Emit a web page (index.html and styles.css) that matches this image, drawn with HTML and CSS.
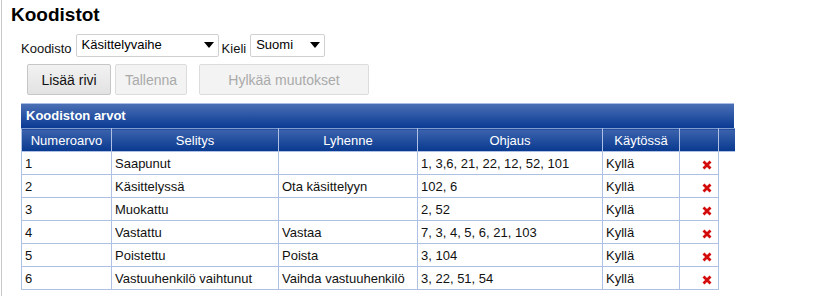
FILE: index.html
```html
<!DOCTYPE html>
<html lang="fi">
<head>
  <meta charset="UTF-8">
  <title>Koodistot</title>
  <link rel="stylesheet" href="styles.css">
</head>
<body>
  <div class="page">
    <h1>Koodistot</h1>

    <div class="filters">
      <label for="koodisto">Koodisto</label>
      <div class="select-wrap wide">
        <select id="koodisto">
          <option>Käsittelyvaihe</option>
        </select>
      </div>
      <label for="kieli">Kieli</label>
      <div class="select-wrap narrow">
        <select id="kieli">
          <option>Suomi</option>
        </select>
      </div>
    </div>

    <div class="toolbar">
      <button class="btn btn-add">Lisää rivi</button>
      <button class="btn btn-save" disabled>Tallenna</button>
      <button class="btn btn-reject" disabled>Hylkää muutokset</button>
    </div>

    <!-- Koodiston arvot -->
    <div class="grid">
      <div class="grid-caption">Koodiston arvot</div>
      <table>
        <thead>
          <tr>
            <th class="c-num">Numeroarvo</th>
            <th class="c-sel">Selitys</th>
            <th class="c-lyh">Lyhenne</th>
            <th class="c-ohj">Ohjaus</th>
            <th class="c-kay">Käytössä</th>
            <th class="c-del"></th>
            <th class="c-gap"></th>
          </tr>
        </thead>
        <tbody>
          <tr><td>1</td><td>Saapunut</td><td></td><td>1, 3,6, 21, 22, 12, 52, 101</td><td>Kyllä</td><td class="del"><svg viewBox="0 0 10 10"><path d="M1.5 1.5 8.5 8.5M8.5 1.5 1.5 8.5"/></svg></td></tr>
          <tr><td>2</td><td>Käsittelyssä</td><td>Ota käsittelyyn</td><td>102, 6</td><td>Kyllä</td><td class="del"><svg viewBox="0 0 10 10"><path d="M1.5 1.5 8.5 8.5M8.5 1.5 1.5 8.5"/></svg></td></tr>
          <tr><td>3</td><td>Muokattu</td><td></td><td>2, 52</td><td>Kyllä</td><td class="del"><svg viewBox="0 0 10 10"><path d="M1.5 1.5 8.5 8.5M8.5 1.5 1.5 8.5"/></svg></td></tr>
          <tr><td>4</td><td>Vastattu</td><td>Vastaa</td><td>7, 3, 4, 5, 6, 21, 103</td><td>Kyllä</td><td class="del"><svg viewBox="0 0 10 10"><path d="M1.5 1.5 8.5 8.5M8.5 1.5 1.5 8.5"/></svg></td></tr>
          <tr><td>5</td><td>Poistettu</td><td>Poista</td><td>3, 104</td><td>Kyllä</td><td class="del"><svg viewBox="0 0 10 10"><path d="M1.5 1.5 8.5 8.5M8.5 1.5 1.5 8.5"/></svg></td></tr>
          <tr><td>6</td><td>Vastuuhenkilö vaihtunut</td><td>Vaihda vastuuhenkilö</td><td>3, 22, 51, 54</td><td>Kyllä</td><td class="del"><svg viewBox="0 0 10 10"><path d="M1.5 1.5 8.5 8.5M8.5 1.5 1.5 8.5"/></svg></td></tr>
        </tbody>
      </table>
    </div>
  </div>
</body>
</html>
```

FILE: styles.css
```css
body {
  font-family: 'Liberation Sans', Arial, sans-serif;
  font-size: 13px;
  color: #111;
  background-color: #fff;
  margin: 0;
  padding: 0 0 0 1px;
}
.page {
  border-left: 1px solid #c8c8c8;
  min-height: 296px;
  padding-left: 9px;
  box-sizing: border-box;
}
h1 {
  margin: 0;
  padding-top: 4px;
  font-size: 19px;
  line-height: 22px;
  font-weight: bold;
  color: #000;
}
.filters {
  display: flex;
  align-items: center;
  gap: 3px;
  margin: 8px 0 0 10px;
  height: 23px;
}
.filters label {
  margin-top: 6px;
  margin-right: 1px;
}
.select-wrap {
  position: relative;
  height: 23px;
}
.select-wrap.wide { width: 143px; }
.select-wrap.narrow { width: 75px; }
.select-wrap select {
  appearance: none;
  -webkit-appearance: none;
  width: 100%;
  height: 100%;
  border: 1px solid #d0d0d0;
  border-radius: 2px;
  background-color: #fff;
  font-family: inherit;
  font-size: 13px;
  color: #000;
  padding: 0 0 2px 5px;
  margin: 0;
}
.select-wrap::after {
  content: '';
  position: absolute;
  right: 5px;
  top: 8px;
  border-left: 5px solid transparent;
  border-right: 5px solid transparent;
  border-top: 6px solid #000;
  pointer-events: none;
}
.toolbar {
  display: flex;
  gap: 4px;
  margin: 7px 0 0 16px;
}
.btn {
  height: 31px;
  font-family: inherit;
  font-size: 14px;
  border: 1px solid #dcdcdc;
  border-radius: 2px;
  background-color: #f3f3f3;
  color: #aaa;
  padding: 0;
}
.btn-add {
  width: 84px;
  color: #111;
  border-color: #c6c6c6;
  background: linear-gradient(#f2f2f2, #e2e2e2);
}
.btn-save {
  width: 72px;
}
.btn-reject {
  width: 170px;
  margin-left: 8px;
}
.grid {
  width: 713px;
  margin: 8px 0 0 10px;
}
.grid-caption {
  height: 24px;
  line-height: 24px;
  border-top: 1px solid #a9bde4;
  background: linear-gradient(#4a6fb5, #0a3a93);
  color: #fff;
  font-weight: bold;
  padding-left: 5px;
}
table {
  border-collapse: collapse;
  table-layout: fixed;
  width: 713px;
}
th, td {
  box-sizing: border-box;
  border: 1px solid #aec1e5;
  height: 23px;
  padding: 0 3px;
  white-space: nowrap;
  overflow: hidden;
}
th {
  background: linear-gradient(#3c63ad, #08398f);
  color: #fff;
  font-weight: normal;
  text-align: center;
  border-top-color: #7f9bd0;
  border-bottom-color: #aec1e5;
}
th.c-gap {
  border-right: none;
}
td {
  text-align: left;
  padding-top: 1px;
}
.c-num { width: 90px; }
.c-sel { width: 167px; }
.c-lyh { width: 139px; }
.c-ohj { width: 185px; }
.c-kay { width: 77px; }
.c-del { width: 39px; }
.c-gap { width: 16px; }
td.del {
  text-align: right;
  padding-right: 6px;
}
td.del svg {
  width: 10px;
  height: 10px;
  display: inline-block;
  vertical-align: middle;
}
td.del path {
  stroke: #d40b0b;
  stroke-width: 2.8;
  fill: none;
}
```
